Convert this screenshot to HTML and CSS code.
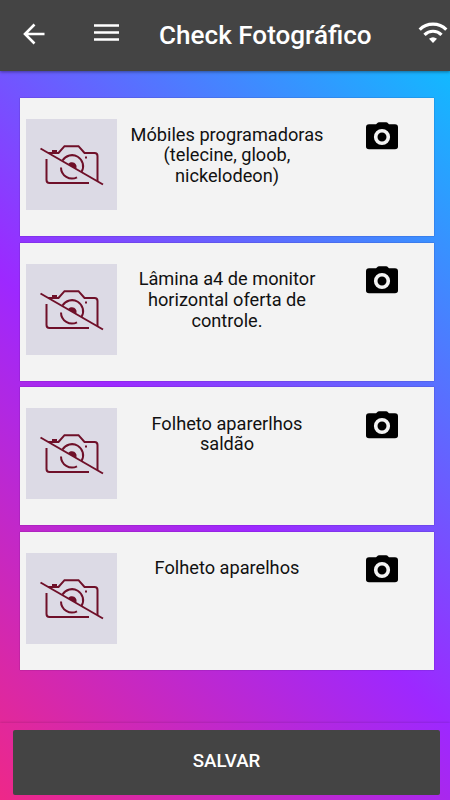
FILE: index.html
```html
<!DOCTYPE html>
<html lang="pt-BR">
<head>
<meta charset="utf-8">
<title>Check Fotográfico</title>
<link rel="stylesheet" href="styles.css">
</head>
<body>
<svg class="defs" aria-hidden="true">
  <symbol id="no-photo" viewBox="0 0 91 91">
    <g fill="none" stroke="#6f1029" stroke-width="2">
      <path d="M14.500 29.500 77 65.500"/>
      <path d="M20.500 40V61Q20.500 64 23.500 64H63"/>
      <path d="M22 34H32.500L38.500 27.200H52.500L58.500 34H68.500Q71.500 34 71.500 37V62"/>
      <path d="M36.500 41.500A10.800 10.800 0 0 1 55.500 53"/>
      <path d="M35 48.500A11 11 0 0 0 51 58.300"/>
    </g>
    <path fill="#6f1029" d="M26 31h5v3h-5zM59 37.500h2v2h-2zM42 45.500A4 4 0 0 1 50 50z"/>
  </symbol>
  <symbol id="camera" viewBox="0 0 32 28">
    <path d="M3 2.200H10L12 .6Q12.500 .2 13.200 .2H20Q20.700 .2 21.200 .6L23 2.200H29Q32 2.200 32 5.200V24.500Q32 27.300 29 27.300H3Q0 27.300 0 24.500V5.200Q0 2.200 3 2.200Z"/>
    <circle cx="16" cy="15" r="6.300" fill="none" stroke="#f3f3f3" stroke-width="3.600"/>
  </symbol>
</svg>
<div class="screen">
  <header class="toolbar">
    <svg class="back" viewBox="0 0 24 24"><path d="M23.500 12H4M13.500 2.500 4 12l9.500 9.500"/></svg>
    <svg class="menu" viewBox="0 0 25 17"><path d="M0 1.500H25M0 8.500H25M0 15.500H25"/></svg>
    <h1>Check Fotográfico</h1>
    <svg class="wifi" viewBox="0 0 30 22"><path d="M1.700 7.600A18.800 18.800 0 0 1 28.300 7.600M6.500 12.800A12 12 0 0 1 23.500 12.800"/><path class="dot" d="M11 16.700Q15 13.700 19 16.700L15 20.900Z"/></svg>
  </header>
  <main class="list">
    <article class="card"><div class="thumb"><svg><use href="#no-photo"/></svg></div><p>Móbiles programadoras (telecine, gloob, nickelodeon)</p><svg class="camera"><use href="#camera"/></svg></article>
    <article class="card"><div class="thumb"><svg><use href="#no-photo"/></svg></div><p>Lâmina a4 de monitor horizontal oferta de controle.</p><svg class="camera"><use href="#camera"/></svg></article>
    <article class="card"><div class="thumb"><svg><use href="#no-photo"/></svg></div><p>Folheto aparerlhos saldão</p><svg class="camera"><use href="#camera"/></svg></article>
    <article class="card"><div class="thumb"><svg><use href="#no-photo"/></svg></div><p>Folheto aparelhos</p><svg class="camera"><use href="#camera"/></svg></article>
  </main>
  <footer><button>SALVAR</button></footer>
</div>
</body>
</html>
```

FILE: styles.css
```css
* { box-sizing: border-box; }
body { margin: 0; font-family: Roboto, "Liberation Sans", sans-serif; }
.defs { display: none; }
.screen {
  display: flex;
  flex-direction: column;
  height: 800px;
  overflow: hidden;
  background: linear-gradient(45deg, #ee2888 0%, #9d28ff 42%, #10bbff 95%);
}
.toolbar {
  display: flex;
  flex: none;
  height: 71px;
  padding-left: 21px;
  background: #444;
  box-shadow: 0 1px 3px rgba(0, 0, 0, .4);
}
.toolbar path { fill: none; stroke: #fff; stroke-width: 2.600; }
.back { width: 24px; height: 24px; margin-top: 22px; }
.menu { width: 25px; height: 17px; margin: 24px 0 0 49px; }
.toolbar h1 {
  width: 213px;
  margin: 20px 0 0 40px;
  color: #fff;
  font-size: 26.100px;
  font-weight: 500;
  line-height: 30px;
  white-space: nowrap;
}
.wifi { flex: none; width: 30px; height: 22px; margin: 21.500px 0 0 45.500px; }
.toolbar .wifi path { stroke-width: 3.200; }
.toolbar .wifi .dot { fill: #fff; stroke: none; }
.list {
  display: flex;
  flex: none;
  flex-direction: column;
  gap: 6.500px;
  padding: 27px 16px 0 19.500px;
}
.card {
  display: flex;
  align-items: flex-start;
  height: 138px;
  padding: 21px 0 0 6.500px;
  background: #f3f3f3;
  box-shadow: 0 0 1px rgba(40, 0, 80, .6);
}
.thumb { flex: none; width: 91px; height: 91px; background: #dcdae5; }
.thumb svg { display: block; width: 91px; height: 91px; }
.card p {
  width: 206px;
  margin: 5.500px 0 0 7px;
  color: #111;
  font-size: 18.200px;
  line-height: 20.800px;
  text-align: center;
}
.camera { flex: none; width: 32px; height: 28px; margin: 2.700px 0 0 35.500px; }
footer {
  flex: none;
  margin-top: auto;
  height: 77px;
  padding: 7px 10px 5px 13px;
  box-shadow: 0 -1px 2px rgba(0, 0, 0, .12);
}
footer button {
  display: block;
  width: 100%;
  height: 65px;
  padding: 0;
  border: 0;
  border-radius: 2px;
  background: #444;
  color: #fff;
  font: 500 18.700px/62px Roboto, "Liberation Sans", sans-serif;
}
footer button { padding-bottom: 3px; }
```
